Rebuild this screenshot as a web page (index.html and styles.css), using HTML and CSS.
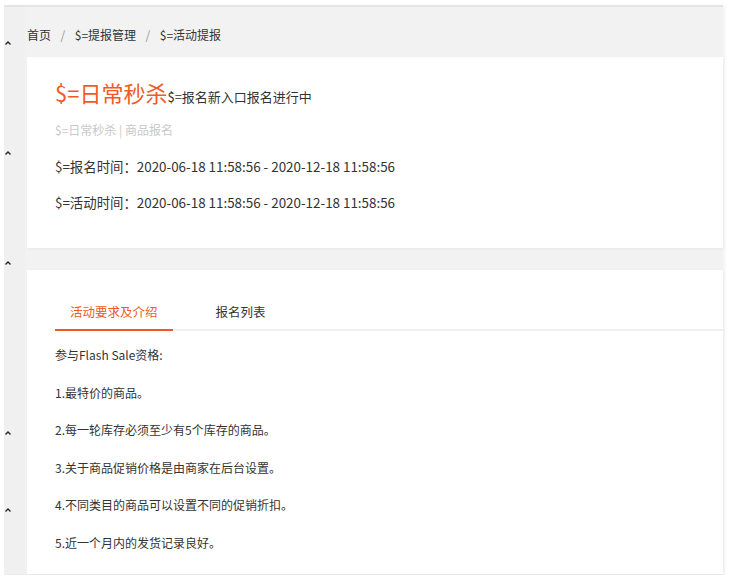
FILE: index.html
```html
<!DOCTYPE html>
<html>
<head>
  <meta charset="utf-8">
  <meta name="viewport" content="width=device-width">
  <link rel="stylesheet" href="styles.css">
</head>
<body>

<div class="frame">
  <div class="rail">
    <span class="caret c1"><svg width="6" height="4" viewBox="0 0 6 4"><polyline points="0.5,3.5 3,1 5.5,3.5" fill="none" stroke="#222" stroke-width="1.3"/></svg></span>
    <span class="caret c2"><svg width="6" height="4" viewBox="0 0 6 4"><polyline points="0.5,3.5 3,1 5.5,3.5" fill="none" stroke="#222" stroke-width="1.3"/></svg></span>
    <span class="caret c3"><svg width="6" height="4" viewBox="0 0 6 4"><polyline points="0.5,3.5 3,1 5.5,3.5" fill="none" stroke="#222" stroke-width="1.3"/></svg></span>
    <span class="caret c4"><svg width="6" height="4" viewBox="0 0 6 4"><polyline points="0.5,3.5 3,1 5.5,3.5" fill="none" stroke="#222" stroke-width="1.3"/></svg></span>
    <span class="caret c5"><svg width="6" height="4" viewBox="0 0 6 4"><polyline points="0.5,3.5 3,1 5.5,3.5" fill="none" stroke="#222" stroke-width="1.3"/></svg></span>
  </div>

  <div class="main">
    <div class="breadcrumb">
      <span>首页</span><span class="sep">/</span><span>$=提报管理</span><span class="sep">/</span><span>$=活动提报</span>
    </div>

    <div class="card head">
      <div class="title-row">
        <span class="title">$=日常秒杀</span><span class="status">$=报名新入口报名进行中</span>
      </div>
      <p class="sub">$=日常秒杀 | 商品报名</p>
      <p class="time">$=报名时间：2020-06-18 11:58:56 - 2020-12-18 11:58:56</p>
      <p class="time">$=活动时间：2020-06-18 11:58:56 - 2020-12-18 11:58:56</p>
    </div>

    <div class="card body">
      <div class="tabs">
        <div class="tab active">活动要求及介绍</div>
        <div class="tab">报名列表</div>
      </div>
      <div class="rules">
        <p>参与Flash Sale资格:</p>
        <p>1.最特价的商品。</p>
        <p>2.每一轮库存必须至少有5个库存的商品。</p>
        <p>3.关于商品促销价格是由商家在后台设置。</p>
        <p>4.不同类目的商品可以设置不同的促销折扣。</p>
        <p>5.近一个月内的发货记录良好。</p>
      </div>
    </div>
  </div>
</div>

</body>
</html>
```

FILE: styles.css
```css
body {
  margin: 0;
  background: #fff;
  font-family: "Noto Sans CJK SC", "Noto Sans", sans-serif;
  color: #333;
}

p {
  margin: 0;
}

.frame {
  position: relative;
  display: flex;
  margin: 5px 0 0 4px;
  width: 719px;
  height: 570px;
  background: #f2f2f2;
  border-top: 2px solid #e4e4e4;
  border-bottom: 1px solid #ececec;
  box-shadow: 2px 0 3px rgba(0, 0, 0, 0.05);
  box-sizing: border-box;
}

.rail {
  position: relative;
  width: 21px;
  flex-shrink: 0;
  background: #f0f0f0;
}

.caret {
  position: absolute;
  left: 1px;
  line-height: 0;
}
.c1 { top: 31px; }
.c2 { top: 141px; }
.c3 { top: 251px; }
.c4 { top: 421px; }
.c5 { top: 498px; }

.main {
  flex: 1;
  display: flex;
  flex-direction: column;
}

.breadcrumb {
  height: 50px;
  box-sizing: border-box;
  padding: 19px 0 0 2px;
  font-size: 12px;
  line-height: 18px;
  color: #333;
}

.breadcrumb .sep {
  margin: 0 9.5px;
  color: #999;
}

.card {
  background: #fff;
  margin-left: 2px;
  box-shadow: 1px 1px 3px rgba(0, 0, 0, 0.04);
}

.head {
  height: 191px;
  box-sizing: border-box;
  padding: 20px 0 0 28px;
}

.title-row {
  display: flex;
  align-items: baseline;
  height: 30px;
}

.title {
  font-size: 22px;
  line-height: 30px;
  color: #f05a26;
}

.status {
  font-size: 13px;
  color: #333;
}

.sub {
  margin-top: 11px;
  font-size: 12px;
  line-height: 24px;
  color: #c8c8c8;
}

.time {
  margin-top: 12px;
  font-size: 13.4px;
  line-height: 24px;
  color: #333;
}

.body {
  flex: 1;
  margin-top: 22px;
  padding: 20px 0 0 28px;
}

.tabs {
  display: flex;
  gap: 28px;
  border-bottom: 2px solid #f0f0f0;
}

.tab {
  padding: 5px 15px 0;
  line-height: 34px;
  font-size: 12.5px;
  color: #333;
  margin-bottom: -2px;
  border-bottom: 2px solid transparent;
}

.tab.active {
  color: #f05a26;
  border-bottom-color: #f05a26;
}

.rules {
  padding-top: 5px;
  font-size: 12px;
  line-height: 37.6px;
  color: #333;
}
```
